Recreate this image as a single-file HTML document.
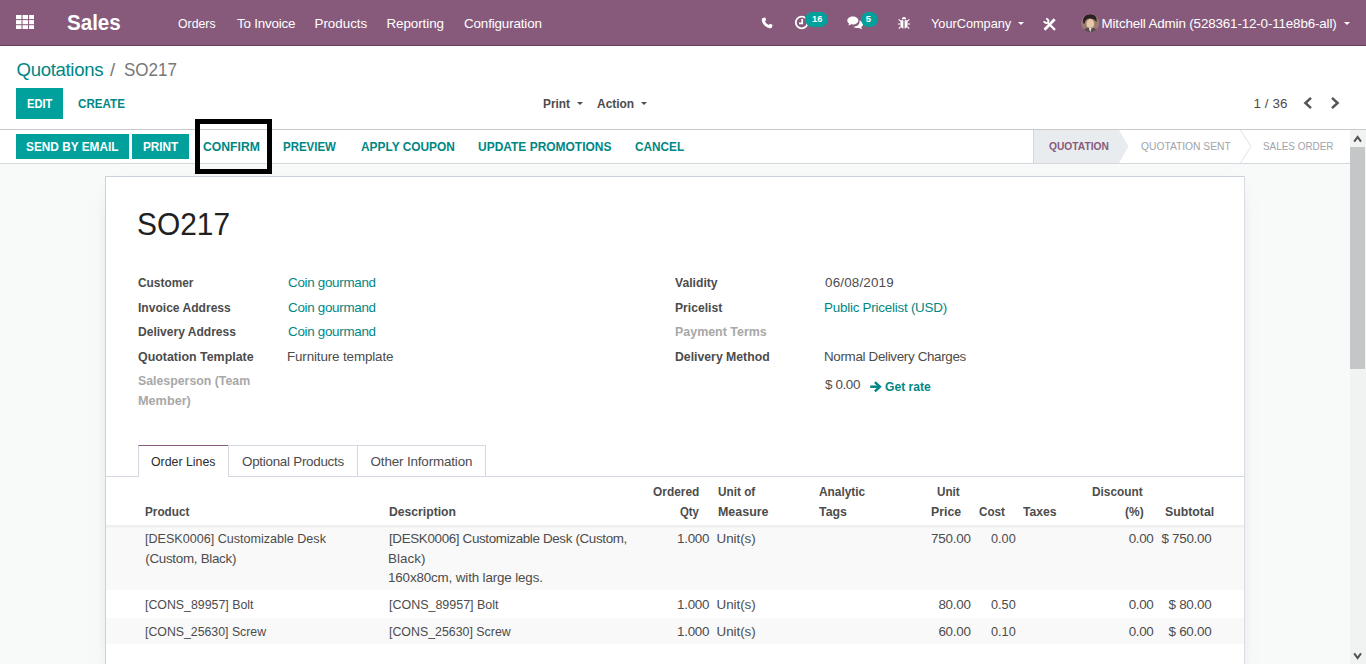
<!DOCTYPE html>
<html lang="en">
<head>
<meta charset="utf-8">
<title>SO217 - Odoo</title>
<style>
*{box-sizing:border-box;margin:0;padding:0}
html,body{width:1366px;height:664px;overflow:hidden;background:#fff}
body{font-family:"Liberation Sans",sans-serif;font-size:13px;color:#4c4c4c;position:relative}
.a{position:absolute}
.x{position:absolute;white-space:nowrap;transform-origin:0 0}
#nav{position:absolute;left:0;top:0;width:1366px;height:46px;background:#875a7b;border-bottom:1px solid #643f59}
.badge{position:absolute;background:#00a09d;border-radius:8px;height:15px;top:12px}
.caret{position:absolute;width:0;height:0;border-style:solid;border-color:#fff transparent transparent transparent;border-width:3px 3px 0 3px}
#cp{position:absolute;left:0;top:46px;width:1366px;height:84px;background:#fff;border-bottom:1px solid #c9c9c9}
#sb{position:absolute;left:0;top:130px;width:1350px;height:34px;background:#fff;border-bottom:1px solid #d3d7de}
.tb{position:absolute;background:#00a09d}
#bg{position:absolute;left:0;top:164px;width:1350px;height:500px;background:#f8f9f9}
#sheet{position:absolute;left:105px;top:176px;width:1140px;height:500px;background:#fff;border:1px solid #ccd2db;border-right-color:#d9dde3;box-shadow:0 5px 20px -15px rgba(0,0,0,.5)}
#scroll{position:absolute;left:1350px;top:130px;width:16px;height:534px;background:#f1f2f2}
#thumb{position:absolute;left:0;top:17px;width:15px;height:222px;background:#c5c6c8}
.row{position:absolute;left:106px;width:1138px;background:#f9f9f9}
</style>
</head>
<body>
<div id="nav"></div>
<div id="cp"></div>
<div id="sb"></div>
<div id="bg"></div>
<div id="sheet"></div>
<div id="scroll"><div id="thumb"></div></div>

<!-- navbar icons -->
<svg class="a" style="left:15.7px;top:14.7px" width="18.6" height="14.3" viewBox="0 0 18.6 14.3"><g fill="#fff"><rect x="0" y="0" width="5.5" height="4.1"/><rect x="6.55" y="0" width="5.5" height="4.1"/><rect x="13.1" y="0" width="5.5" height="4.1"/><rect x="0" y="5.1" width="5.5" height="4.1"/><rect x="6.55" y="5.1" width="5.5" height="4.1"/><rect x="13.1" y="5.1" width="5.5" height="4.1"/><rect x="0" y="10.2" width="5.5" height="4.1"/><rect x="6.55" y="10.2" width="5.5" height="4.1"/><rect x="13.1" y="10.2" width="5.5" height="4.1"/></g></svg>
<!-- phone -->
<svg class="a" style="left:761px;top:17px" width="12" height="12" viewBox="0 0 12 12"><path d="M2.6 0.8 L4.3 0.5 L5.2 3.2 L3.9 4.1 C4.6 5.9 6.1 7.4 7.9 8.1 L8.8 6.8 L11.5 7.7 L11.2 9.4 C10.9 10.8 9.8 11.4 8.6 11.2 C4.5 10.4 1.6 7.5 0.8 3.4 C0.6 2.2 1.2 1.1 2.6 0.8Z" fill="#fff"/></svg>
<!-- activities clock -->
<svg class="a" style="left:794px;top:15px" width="16" height="16" viewBox="0 0 16 16"><circle cx="7.7" cy="7.5" r="5.9" fill="none" stroke="#fff" stroke-width="1.8"/><path d="M8.2 4 V8.3 H5" fill="none" stroke="#fff" stroke-width="1.7"/></svg>
<span class="badge" style="left:805px;width:23px"></span>
<!-- discuss comments -->
<svg class="a" style="left:847px;top:16px" width="17" height="14" viewBox="0 0 17 14"><path d="M5.8 0.4 C9 0.4 11.4 2.1 11.4 4.4 C11.4 6.7 9 8.4 5.8 8.4 C5.2 8.4 4.7 8.35 4.2 8.25 C3.4 8.9 2.3 9.4 1 9.5 C1.6 8.9 2 8.2 2.1 7.4 C1 6.7 0.3 5.6 0.3 4.4 C0.3 2.1 2.7 0.4 5.8 0.4Z" fill="#fff"/><path d="M12.6 4.6 C14.6 5.2 16 6.5 16 8.2 C16 9.4 15.3 10.4 14.2 11.1 C14.3 11.9 14.7 12.6 15.3 13.2 C14 13.1 12.9 12.6 12.1 11.9 C11.6 12 11.1 12.1 10.5 12.1 C8.8 12.1 7.3 11.6 6.3 10.7 C6.6 10.7 9.3 10.6 11 9.2 C12.4 8 12.8 6.2 12.6 4.6Z" fill="#fff"/></svg>
<span class="badge" style="left:860.5px;width:17.5px"></span>
<!-- debug bug -->
<svg class="a" style="left:897px;top:16px" width="14" height="14" viewBox="0 0 14 14"><g fill="none" stroke="#fff" stroke-width="1.1"><path d="M3.6 5.2 L1.6 3.4 M10.4 5.2 L12.4 3.4 M3.2 8 H0.9 M10.8 8 H13.1 M3.6 10.6 L1.8 12.6 M10.4 10.6 L12.2 12.6"/></g><path d="M4.8 3.2 C4.8 1.9 5.8 1 7 1 C8.2 1 9.2 1.9 9.2 3.2Z" fill="#fff"/><path d="M3.4 4.2 H6.4 V12.6 C4.6 12.4 3.4 10.9 3.4 8.8Z M7.6 4.2 H10.6 V8.8 C10.6 10.9 9.4 12.4 7.6 12.6Z" fill="#fff"/></svg>
<span class="caret" style="left:1018px;top:22px"></span>
<!-- wrench & screwdriver -->
<svg class="a" style="left:1043px;top:17.6px" width="14" height="14" viewBox="0 0 14 14"><path d="M11.7 1.3 L1.5 11.7" stroke="#fff" stroke-width="2.7" fill="none"/><path d="M5 5 L12 11.9" stroke="#fff" stroke-width="2.2" fill="none"/><path d="M3.13 0.91 A2.1 2.1 0 1 1 1.21 2.92" stroke="#fff" stroke-width="1.9" fill="none"/></svg>
<!-- avatar -->
<svg class="a" style="left:1081px;top:13.5px" width="18.4" height="18.4" viewBox="0 0 18.4 18.4"><defs><clipPath id="av"><circle cx="9.2" cy="9.2" r="9"/></clipPath></defs><g clip-path="url(#av)"><rect width="18.4" height="18.4" fill="#9a7c70"/><path d="M2 9 C1.5 3 5 0 9.5 0 C14 0 16.5 3.5 15.5 8 C14 5.5 12 4.5 9 4.5 C6 4.5 4 6 3.5 10Z" fill="#2a2024"/><ellipse cx="9.3" cy="9.8" rx="3.9" ry="4.8" fill="#e6c7a8"/><path d="M2 18.4 C3 14.5 6 13.6 9.2 13.6 C12.4 13.6 15.5 14.5 16.5 18.4Z" fill="#5d4a52"/><path d="M7.8 13.4 L9.2 18.4 L10.6 13.4Z" fill="#f2efe9"/></g></svg>
<span class="caret" style="left:1344px;top:22px"></span>

<!-- buttons -->
<div class="tb" style="left:16px;top:88px;width:47px;height:31px"></div>
<div class="tb" style="left:16px;top:134px;width:113px;height:25px"></div>
<div class="tb" style="left:132px;top:134px;width:57px;height:25px"></div>
<span class="caret" style="left:576.5px;top:102px;border-top-color:#4c4c4c"></span>
<span class="caret" style="left:641px;top:102px;border-top-color:#4c4c4c"></span>
<!-- pager chevrons -->
<svg class="a" style="left:1302px;top:96px" width="40" height="14" viewBox="0 0 40 14"><g fill="none" stroke="#555" stroke-width="2.5"><path d="M9 1.8 L3.4 7 L9 12.2"/><path d="M30 1.8 L35.6 7 L30 12.2"/></g></svg>

<!-- status stages -->
<svg class="a" style="left:1033px;top:130px" width="316" height="33" viewBox="0 0 316 33"><path d="M0 0 H86 L95.5 16.5 L86 33 H0Z" fill="#e9ecef"/><path d="M0.5 0 V33" stroke="#d3d7de" stroke-width="1" fill="none"/><path d="M207.5 0 L218 16.5 L207.5 33" stroke="#dfe2e7" stroke-width="1" fill="none"/></svg>

<!-- get rate arrow -->
<svg class="a" style="left:870px;top:381px" width="12" height="12" viewBox="0 0 12 12"><path d="M0.2 5.7 H9.4" fill="none" stroke="#008784" stroke-width="2.5"/><path d="M4.9 1.1 L9.9 5.7 L4.9 10.3" fill="none" stroke="#008784" stroke-width="2.5"/></svg>

<!-- notebook tabs -->
<div class="a" style="left:106px;top:476px;width:1138px;height:1px;background:#d3d7df"></div>
<div class="a" style="left:138px;top:445px;width:91px;height:32px;background:#fff;border:1px solid #d3d7df;border-top-color:#875a7b;border-bottom:0"></div>
<div class="a" style="left:228px;top:445px;width:130px;height:31px;border:1px solid #d3d7df;border-bottom:0"></div>
<div class="a" style="left:357px;top:445px;width:129px;height:31px;border:1px solid #d3d7df;border-bottom:0"></div>

<!-- table stripes -->
<div class="row" style="top:525px;height:65px"></div>
<div class="a" style="left:106px;top:525px;width:1138px;height:3px;background:linear-gradient(#eceded,#f5f5f5)"></div>
<div class="row" style="top:618px;height:26px"></div>

<!-- scrollbar arrows -->
<svg class="a" style="left:1350px;top:130px" width="16" height="17" viewBox="0 0 16 17"><path d="M4.2 11.6 L7.6 7 L11 11.6" fill="none" stroke="#505050" stroke-width="2"/></svg>
<svg class="a" style="left:1350px;top:648px" width="16" height="17" viewBox="0 0 16 17"><path d="M4.2 5.4 L7.6 10 L11 5.4" fill="none" stroke="#505050" stroke-width="2"/></svg>

<div class="grp"><!-- navbar -->
<span class="x" style="left:67.20px;top:8px;font-size:22.4px;line-height:30px;color:#fff;transform:scaleX(0.9180);font-weight:bold">Sales</span>
<span class="x" style="left:178.20px;top:14px;font-size:13.4px;line-height:20px;color:#fff;transform:scaleX(0.9168)">Orders</span>
<span class="x" style="left:237.00px;top:14px;font-size:13.4px;line-height:20px;color:#fff;letter-spacing:-0.205px">To Invoice</span>
<span class="x" style="left:314.50px;top:14px;font-size:13.4px;line-height:20px;color:#fff;letter-spacing:-0.021px">Products</span>
<span class="x" style="left:386.50px;top:14px;font-size:13.4px;line-height:20px;color:#fff;letter-spacing:-0.077px">Reporting</span>
<span class="x" style="left:464.00px;top:14px;font-size:13.4px;line-height:20px;color:#fff;letter-spacing:-0.142px">Configuration</span>
<span class="x" style="left:930.50px;top:14px;font-size:13.4px;line-height:20px;color:#fff;transform:scaleX(0.9508)">YourCompany</span>
<span class="x" style="left:1101.50px;top:14px;font-size:13.4px;line-height:20px;color:#fff;letter-spacing:-0.150px">Mitchell Admin (528361-12-0-11e8b6-all)</span>
<span class="x" style="left:812.00px;top:11px;font-size:9.5px;line-height:15px;color:#fff;transform:scaleX(0.9724);font-weight:bold">16</span>
<span class="x" style="left:865.70px;top:11px;font-size:9.5px;line-height:15px;color:#fff;letter-spacing:0.000px;font-weight:bold">5</span>
</div>
<div class="grp"><!-- control panel -->
<span class="x" style="left:16.50px;top:57px;font-size:18.6px;line-height:26px;color:#008784;letter-spacing:-0.326px">Quotations</span>
<span class="x" style="left:110.10px;top:57px;font-size:18.6px;line-height:26px;color:#777;letter-spacing:0.000px">/</span>
<span class="x" style="left:123.70px;top:57px;font-size:18.6px;line-height:26px;color:#777;transform:scaleX(0.9158)">SO217</span>
<span class="x" style="left:26.60px;top:94px;font-size:13.4px;line-height:20px;color:#fff;transform:scaleX(0.8333);font-weight:bold">EDIT</span>
<span class="x" style="left:77.50px;top:94px;font-size:13.4px;line-height:20px;color:#008784;transform:scaleX(0.8683);font-weight:bold">CREATE</span>
<span class="x" style="left:542.50px;top:94px;font-size:13.4px;line-height:20px;color:#4c4c4c;transform:scaleX(0.8859);font-weight:bold">Print</span>
<span class="x" style="left:597.00px;top:94px;font-size:13.4px;line-height:20px;color:#4c4c4c;transform:scaleX(0.8921);font-weight:bold">Action</span>
<span class="x" style="left:1253.50px;top:94px;font-size:13.4px;line-height:20px;color:#4c4c4c;letter-spacing:0.089px">1 / 36</span>
</div>
<div class="grp"><!-- statusbar -->
<span class="x" style="left:26.25px;top:137px;font-size:13.4px;line-height:20px;color:#fff;transform:scaleX(0.8833);font-weight:bold">SEND BY EMAIL</span>
<span class="x" style="left:142.50px;top:137px;font-size:13.4px;line-height:20px;color:#fff;transform:scaleX(0.8782);font-weight:bold">PRINT</span>
<span class="x" style="left:202.50px;top:137px;font-size:13.4px;line-height:20px;color:#008784;transform:scaleX(0.9105);font-weight:bold">CONFIRM</span>
<span class="x" style="left:282.50px;top:137px;font-size:13.4px;line-height:20px;color:#008784;transform:scaleX(0.8573);font-weight:bold">PREVIEW</span>
<span class="x" style="left:360.50px;top:137px;font-size:13.4px;line-height:20px;color:#008784;transform:scaleX(0.8885);font-weight:bold">APPLY COUPON</span>
<span class="x" style="left:477.50px;top:137px;font-size:13.4px;line-height:20px;color:#008784;transform:scaleX(0.8939);font-weight:bold">UPDATE PROMOTIONS</span>
<span class="x" style="left:635.00px;top:137px;font-size:13.4px;line-height:20px;color:#008784;transform:scaleX(0.8811);font-weight:bold">CANCEL</span>
<span class="x" style="left:1049.00px;top:136px;font-size:11.5px;line-height:20px;color:#875a7b;transform:scaleX(0.8898);font-weight:bold">QUOTATION</span>
<span class="x" style="left:1141.00px;top:136px;font-size:11.5px;line-height:20px;color:#a0a4ab;transform:scaleX(0.8926)">QUOTATION SENT</span>
<span class="x" style="left:1262.60px;top:136px;font-size:11.5px;line-height:20px;color:#a0a4ab;transform:scaleX(0.8614)">SALES ORDER</span>
</div>
<div class="grp"><!-- form -->
<span class="x" style="left:136.94px;top:205px;font-size:31px;line-height:40px;color:#212121;transform:scaleX(0.9642)">SO217</span>
<span class="x" style="left:138.00px;top:273px;font-size:13.4px;line-height:20px;color:#4c4c4c;transform:scaleX(0.8880);font-weight:bold">Customer</span>
<span class="x" style="left:138.00px;top:298px;font-size:13.4px;line-height:20px;color:#4c4c4c;transform:scaleX(0.9010);font-weight:bold">Invoice Address</span>
<span class="x" style="left:138.00px;top:322px;font-size:13.4px;line-height:20px;color:#4c4c4c;transform:scaleX(0.8994);font-weight:bold">Delivery Address</span>
<span class="x" style="left:138.00px;top:347px;font-size:13.4px;line-height:20px;color:#4c4c4c;transform:scaleX(0.9269);font-weight:bold">Quotation Template</span>
<span class="x" style="left:138.00px;top:371px;font-size:13.4px;line-height:20px;color:#a8a8a8;transform:scaleX(0.9205);font-weight:bold">Salesperson (Team</span>
<span class="x" style="left:138.00px;top:391px;font-size:13.4px;line-height:20px;color:#a8a8a8;transform:scaleX(0.9468);font-weight:bold">Member)</span>
<span class="x" style="left:288.00px;top:273px;font-size:13.4px;line-height:20px;color:#008784;letter-spacing:-0.292px">Coin gourmand</span>
<span class="x" style="left:288.00px;top:298px;font-size:13.4px;line-height:20px;color:#008784;letter-spacing:-0.292px">Coin gourmand</span>
<span class="x" style="left:288.00px;top:322px;font-size:13.4px;line-height:20px;color:#008784;letter-spacing:-0.292px">Coin gourmand</span>
<span class="x" style="left:287.00px;top:347px;font-size:13.4px;line-height:20px;color:#4c4c4c;letter-spacing:-0.130px">Furniture template</span>
<span class="x" style="left:674.90px;top:273px;font-size:13.4px;line-height:20px;color:#4c4c4c;transform:scaleX(0.9085);font-weight:bold">Validity</span>
<span class="x" style="left:675.00px;top:298px;font-size:13.4px;line-height:20px;color:#4c4c4c;transform:scaleX(0.9061);font-weight:bold">Pricelist</span>
<span class="x" style="left:675.00px;top:322px;font-size:13.4px;line-height:20px;color:#a8a8a8;transform:scaleX(0.9289);font-weight:bold">Payment Terms</span>
<span class="x" style="left:675.00px;top:347px;font-size:13.4px;line-height:20px;color:#4c4c4c;transform:scaleX(0.9152);font-weight:bold">Delivery Method</span>
<span class="x" style="left:825.00px;top:273px;font-size:13.4px;line-height:20px;color:#4c4c4c;letter-spacing:0.181px">06/08/2019</span>
<span class="x" style="left:824.00px;top:298px;font-size:13.4px;line-height:20px;color:#008784;letter-spacing:-0.229px">Public Pricelist (USD)</span>
<span class="x" style="left:824.00px;top:347px;font-size:13.4px;line-height:20px;color:#4c4c4c;letter-spacing:-0.331px">Normal Delivery Charges</span>
<span class="x" style="left:825.00px;top:375px;font-size:13.4px;line-height:20px;color:#4c4c4c;letter-spacing:-0.376px">$ 0.00</span>
<span class="x" style="left:885.20px;top:377px;font-size:13.4px;line-height:20px;color:#008784;transform:scaleX(0.9031);font-weight:bold">Get rate</span>
</div>
<div class="grp"><!-- tabs -->
<span class="x" style="left:151.10px;top:452px;font-size:13.4px;line-height:20px;color:#2b2b2b;transform:scaleX(0.9208)">Order Lines</span>
<span class="x" style="left:242.00px;top:452px;font-size:13.4px;line-height:20px;color:#4c4c4c;letter-spacing:-0.265px">Optional Products</span>
<span class="x" style="left:370.60px;top:452px;font-size:13.4px;line-height:20px;color:#4c4c4c;letter-spacing:-0.147px">Other Information</span>
</div>
<div class="grp"><!-- table header -->
<span class="x" style="left:145.20px;top:502px;font-size:13.4px;line-height:20px;color:#4c4c4c;transform:scaleX(0.8762);font-weight:bold">Product</span>
<span class="x" style="left:389.00px;top:502px;font-size:13.4px;line-height:20px;color:#4c4c4c;transform:scaleX(0.9091);font-weight:bold">Description</span>
<span class="x" style="left:652.90px;top:482px;font-size:13.4px;line-height:20px;color:#4c4c4c;transform:scaleX(0.8880);font-weight:bold">Ordered</span>
<span class="x" style="left:679.60px;top:502px;font-size:13.4px;line-height:20px;color:#4c4c4c;transform:scaleX(0.8481);font-weight:bold">Qty</span>
<span class="x" style="left:717.50px;top:482px;font-size:13.4px;line-height:20px;color:#4c4c4c;transform:scaleX(0.8782);font-weight:bold">Unit of</span>
<span class="x" style="left:717.50px;top:502px;font-size:13.4px;line-height:20px;color:#4c4c4c;transform:scaleX(0.9297);font-weight:bold">Measure</span>
<span class="x" style="left:819.20px;top:482px;font-size:13.4px;line-height:20px;color:#4c4c4c;transform:scaleX(0.8871);font-weight:bold">Analytic</span>
<span class="x" style="left:819.20px;top:502px;font-size:13.4px;line-height:20px;color:#4c4c4c;transform:scaleX(0.9225);font-weight:bold">Tags</span>
<span class="x" style="left:937.00px;top:482px;font-size:13.4px;line-height:20px;color:#4c4c4c;transform:scaleX(0.8732);font-weight:bold">Unit</span>
<span class="x" style="left:930.50px;top:502px;font-size:13.4px;line-height:20px;color:#4c4c4c;transform:scaleX(0.9192);font-weight:bold">Price</span>
<span class="x" style="left:978.50px;top:502px;font-size:13.4px;line-height:20px;color:#4c4c4c;transform:scaleX(0.8714);font-weight:bold">Cost</span>
<span class="x" style="left:1023.30px;top:502px;font-size:13.4px;line-height:20px;color:#4c4c4c;transform:scaleX(0.9089);font-weight:bold">Taxes</span>
<span class="x" style="left:1092.10px;top:482px;font-size:13.4px;line-height:20px;color:#4c4c4c;transform:scaleX(0.8837);font-weight:bold">Discount</span>
<span class="x" style="left:1125.00px;top:502px;font-size:13.4px;line-height:20px;color:#4c4c4c;transform:scaleX(0.8937);font-weight:bold">(%)</span>
<span class="x" style="left:1164.60px;top:502px;font-size:13.4px;line-height:20px;color:#4c4c4c;transform:scaleX(0.9179);font-weight:bold">Subtotal</span>
</div>
<div class="grp"><!-- rows -->
<span class="x" style="left:145.30px;top:529px;font-size:13.4px;line-height:20px;color:#4c4c4c;transform:scaleX(0.9385)">[DESK0006] Customizable Desk</span>
<span class="x" style="left:145.30px;top:549px;font-size:13.4px;line-height:20px;color:#4c4c4c;letter-spacing:-0.299px">(Custom, Black)</span>
<span class="x" style="left:389.00px;top:529px;font-size:13.4px;line-height:20px;color:#4c4c4c;letter-spacing:-0.347px">[DESK0006] Customizable Desk (Custom,</span>
<span class="x" style="left:388.00px;top:549px;font-size:13.4px;line-height:20px;color:#4c4c4c;letter-spacing:0.051px">Black)</span>
<span class="x" style="left:388.00px;top:568px;font-size:13.4px;line-height:20px;color:#4c4c4c;letter-spacing:-0.145px">160x80cm, with large legs.</span>
<span class="x" style="left:677.00px;top:529px;font-size:13.4px;line-height:20px;color:#4c4c4c;letter-spacing:-0.266px">1.000</span>
<span class="x" style="left:716.50px;top:529px;font-size:13.4px;line-height:20px;color:#4c4c4c;letter-spacing:-0.045px">Unit(s)</span>
<span class="x" style="left:931.00px;top:529px;font-size:13.4px;line-height:20px;color:#4c4c4c;letter-spacing:-0.182px">750.00</span>
<span class="x" style="left:990.60px;top:529px;font-size:13.4px;line-height:20px;color:#4c4c4c;transform:scaleX(0.9487)">0.00</span>
<span class="x" style="left:1128.70px;top:529px;font-size:13.4px;line-height:20px;color:#4c4c4c;letter-spacing:-0.338px">0.00</span>
<span class="x" style="left:1161.40px;top:529px;font-size:13.4px;line-height:20px;color:#4c4c4c;letter-spacing:-0.268px">$ 750.00</span>
<span class="x" style="left:145.30px;top:595px;font-size:13.4px;line-height:20px;color:#4c4c4c;transform:scaleX(0.9221)">[CONS_89957] Bolt</span>
<span class="x" style="left:389.00px;top:595px;font-size:13.4px;line-height:20px;color:#4c4c4c;transform:scaleX(0.9314)">[CONS_89957] Bolt</span>
<span class="x" style="left:677.00px;top:595px;font-size:13.4px;line-height:20px;color:#4c4c4c;letter-spacing:-0.266px">1.000</span>
<span class="x" style="left:716.50px;top:595px;font-size:13.4px;line-height:20px;color:#4c4c4c;letter-spacing:-0.045px">Unit(s)</span>
<span class="x" style="left:938.40px;top:595px;font-size:13.4px;line-height:20px;color:#4c4c4c;letter-spacing:-0.216px">80.00</span>
<span class="x" style="left:990.60px;top:595px;font-size:13.4px;line-height:20px;color:#4c4c4c;transform:scaleX(0.9487)">0.50</span>
<span class="x" style="left:1128.70px;top:595px;font-size:13.4px;line-height:20px;color:#4c4c4c;letter-spacing:-0.338px">0.00</span>
<span class="x" style="left:1168.50px;top:595px;font-size:13.4px;line-height:20px;color:#4c4c4c;letter-spacing:-0.255px">$ 80.00</span>
<span class="x" style="left:145.30px;top:622px;font-size:13.4px;line-height:20px;color:#4c4c4c;transform:scaleX(0.9192)">[CONS_25630] Screw</span>
<span class="x" style="left:389.00px;top:622px;font-size:13.4px;line-height:20px;color:#4c4c4c;transform:scaleX(0.9238)">[CONS_25630] Screw</span>
<span class="x" style="left:677.00px;top:622px;font-size:13.4px;line-height:20px;color:#4c4c4c;letter-spacing:-0.266px">1.000</span>
<span class="x" style="left:716.50px;top:622px;font-size:13.4px;line-height:20px;color:#4c4c4c;letter-spacing:-0.045px">Unit(s)</span>
<span class="x" style="left:938.40px;top:622px;font-size:13.4px;line-height:20px;color:#4c4c4c;letter-spacing:-0.216px">60.00</span>
<span class="x" style="left:990.60px;top:622px;font-size:13.4px;line-height:20px;color:#4c4c4c;transform:scaleX(0.9487)">0.10</span>
<span class="x" style="left:1128.70px;top:622px;font-size:13.4px;line-height:20px;color:#4c4c4c;letter-spacing:-0.338px">0.00</span>
<span class="x" style="left:1168.50px;top:622px;font-size:13.4px;line-height:20px;color:#4c4c4c;letter-spacing:-0.255px">$ 60.00</span>
</div>

<div class="a" style="left:195px;top:119px;width:77px;height:55px;border:5px solid #000"></div>
</body>
</html>
